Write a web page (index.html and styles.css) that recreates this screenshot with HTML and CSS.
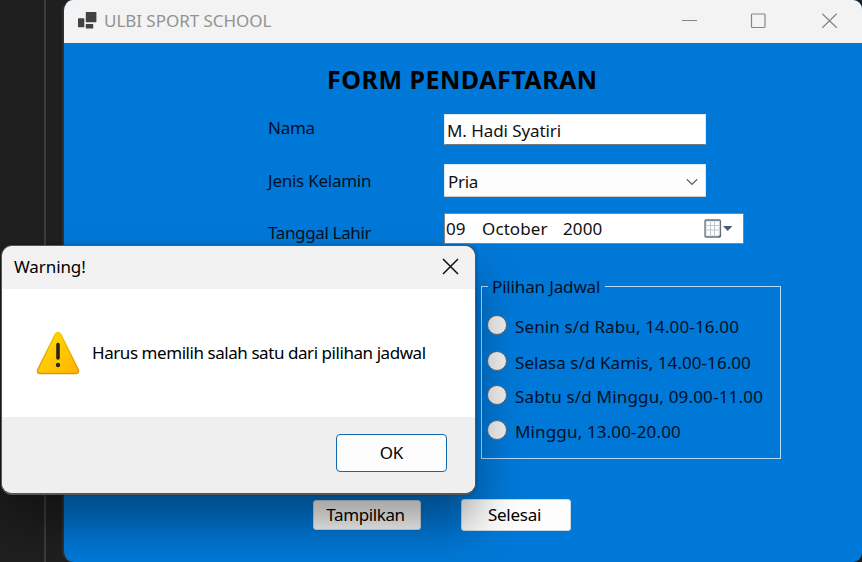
FILE: index.html
```html
<!DOCTYPE html>
<html lang="id">
<head>
<meta charset="utf-8">
<title>ULBI SPORT SCHOOL</title>
<link rel="stylesheet" href="styles.css">
</head>
<body>
<div class="desktop">
  <div class="edge"></div>
  <main class="window">
    <header class="titlebar">
      <svg class="app-icon" width="20" height="18" viewBox="0 0 20 18"><rect x="0" y="6.2" width="6.3" height="9" rx=".6"/><rect x="7.8" y="0" width="10.6" height="10.2" rx=".6"/><rect x="7.8" y="12" width="7.4" height="4.6" rx=".6"/></svg>
      <span class="app-name">ULBI SPORT SCHOOL</span>
      <svg class="controls" width="156" height="16" viewBox="0 0 156 16"><path d="M0 7.5H15M69.5 1.8Q69.5 1 70.3 1H82.2Q83 1 83 1.8V13.7Q83 14.5 82.2 14.5H70.3Q69.5 14.5 69.5 13.7ZM140.3 .8L154.7 14.7M154.7 .8L140.3 14.7"/></svg>
    </header>
    <form class="form">
      <h1>FORM PENDAFTARAN</h1>
      <div class="row row-name"><label>Nama</label><div class="field name">M. Hadi Syatiri</div></div>
      <div class="row row-sex"><label>Jenis Kelamin</label><div class="field select"><span>Pria</span><svg width="12" height="8" viewBox="0 0 12 8"><path d="M.8 1.2L6 6.3L11.2 1.2"/></svg></div></div>
      <div class="row row-date"><label>Tanggal Lahir</label><div class="field date"><span class="day">09</span><span class="month">October</span><span class="year">2000</span>
        <svg width="30" height="20" viewBox="0 0 30 20"><rect class="cal" x="1" y="1" width="15.5" height="17" rx="1"/><rect class="sheet" x="3" y="3" width="11.5" height="13"/><path class="grid" d="M6.5 3V16M10.5 3V16M3 6.5H14.5M3 11H14.5"/><path class="fold" d="M14 18L17 15V18Z"/><path class="arrow" d="M19 7H28.4L23.7 12Z"/></svg></div></div>
      <section class="group">
        <div class="legend"><i></i><span>Pilihan Jadwal</span><i></i></div>
        <div class="options">
          <label class="option tall"><i></i><span class="o1">Senin s/d Rabu, 14.00-16.00</span></label>
          <label class="option"><i></i><span class="o2">Selasa s/d Kamis, 14.00-16.00</span></label>
          <label class="option"><i></i><span class="o3">Sabtu s/d Minggu, 09.00-11.00</span></label>
          <label class="option"><i></i><span class="o4">Minggu, 13.00-20.00</span></label>
        </div>
      </section>
      <div class="actions"><button type="button" class="show">Tampilkan</button><button type="button" class="done">Selesai</button></div>
    </form>
  </main>
  <div class="dialog" role="alertdialog">
    <header class="dialog-head"><span>Warning!</span><svg width="17" height="17" viewBox="0 0 17 17"><path d="M1 1L16 16M16 1L1 16"/></svg></header>
    <div class="dialog-body">
      <svg width="44" height="44" viewBox="0 0 44 44"><defs><linearGradient id="y" x1="0" y1="0" x2="1" y2="1"><stop offset="0" stop-color="#ffe000"/><stop offset="1" stop-color="#ffb300"/></linearGradient><linearGradient id="e" x1="0" y1="0" x2="0" y2="1"><stop offset="0" stop-color="#f3c800"/><stop offset="1" stop-color="#df9110"/></linearGradient></defs><path d="M19.3 3.2Q22 -.2 24.7 3.2L42.2 38.5Q43.6 42.2 40 42.5H4Q.4 42.2 1.8 38.5Z" fill="url(#y)" stroke="url(#e)" stroke-width="1.4"/><path d="M22 13.5V27" stroke="#2b2416" stroke-width="3.6" stroke-linecap="round"/><circle cx="22" cy="34" r="2.2" fill="#2b2416"/></svg>
      <p>Harus memilih salah satu dari pilihan jadwal</p>
    </div>
    <footer class="dialog-foot"><button type="button">OK</button></footer>
  </div>
</div>
</body>
</html>
```
FILE: styles.css
```css
* { box-sizing: border-box; }
body { margin: 0; overflow: hidden; font: 400 17px/24px "Noto Sans", "Open Sans", sans-serif; letter-spacing: -.25px; }
button { font: inherit; letter-spacing: inherit; padding: 0; }
svg { display: block; flex: none; }
.desktop { position: relative; display: flex; width: 862px; height: 562px; background: #1f1f1f; overflow: hidden; }
.edge { width: 46px; border-right: 2px solid #3d3d3d; margin-right: 16px; flex: none; }
.window { width: 800px; flex: none; border-left: 2px solid #303030; background: #0078d7; border-radius: 11px 9px 9px 11px; overflow: hidden; }
.titlebar { height: 43px; display: flex; align-items: center; padding: 0 24px 2px 14px; background: #f3f3f3; color: #929292; }
.app-icon { fill: #424242; margin-right: 6px; }
.app-name { font-size: 17px; letter-spacing: -.04px; flex: 1; white-space: nowrap; }
.controls { fill: none; stroke: #858585; stroke-width: 1.2; }
.form { height: 519px; color: #001028; }
h1 { margin: 0; padding: 18px 0 0 263px; font-size: 25px; line-height: 36px; height: 71px; color: #000; font-weight: 700; white-space: nowrap; letter-spacing: .5px; }
.row { display: flex; margin-left: 204px; }
.row > label { width: 176px; white-space: nowrap; }
.row-name { height: 50px; }
.row-name > label { padding-top: 2px; }
.row-sex { height: 49px; }
.row-sex > label { padding-top: 5px; }
.row-date { height: 73px; }
.row-date > label { padding-top: 8px; letter-spacing: -.35px; }
.field { width: 262px; height: 31px; display: flex; align-items: center; background: #fff; color: #111; border: 1px solid #dbe9f5; border-bottom-color: #777; border-radius: 1px; padding-left: 2px; padding-top: 2px; white-space: nowrap; letter-spacing: -.08px; }
.select { height: 33px; justify-content: space-between; padding: 2px 7px 0 3px; background: #fdfdfd; border-bottom-color: #ccc; letter-spacing: -.3px; }
.select svg { fill: none; stroke: #666; stroke-width: 1.2; }
.date { width: 300px; border-color: #858585; padding: 1px 9px 0 1px; letter-spacing: .1px; }
.day { width: 36px; }
.month { width: 81px; }
.date svg { margin-left: auto; margin-top: -1px; }
.cal { fill: #e1e5ea; stroke: #68707a; stroke-width: 1.3; }
.sheet { fill: #fff; }
.grid { fill: none; stroke: #b9c6d6; }
.fold { fill: #58616c; }
.arrow { fill: #465a7d; }
.group { width: 300px; margin-left: 417px; height: 185px; }
.legend { display: flex; height: 11px; white-space: nowrap; }
.legend i { border-top: 1px solid #b5dcf8; }
.legend span { line-height: 24px; margin: -11px 0 0; padding: 0 5px 0 4px; width: 117px; letter-spacing: -.15px; }
.legend i:first-child { width: 7px; border-left: 1px solid #b5dcf8; }
.legend i:last-child { flex: 1; border-right: 1px solid #b5dcf8; }
.options { border: 1px solid #b5dcf8; border-top: 0; height: 162px; padding: 18px 0 0 5px; }
.option { display: flex; height: 34.6px; white-space: nowrap; }
.option.tall { height: 35.6px; }
.option i { width: 20px; height: 20px; margin-right: 8px; border: 1px solid #5d6974; border-radius: 50%; background: #ededed; flex: none; }
.o1 { letter-spacing: .13px; }
.o2 { letter-spacing: .06px; }
.o3 { letter-spacing: .18px; }
.o4 { letter-spacing: .15px; }
.actions { display: flex; margin-left: 249px; gap: 40px; padding-top: 28px; align-items: center; }
.actions button { border: 1px solid #ccd9e3; border-radius: 3px; background: #fdfdfd; color: #000; padding-right: 3px; }
.actions .show { width: 108px; height: 30px; letter-spacing: -.4px; }
.actions .done { width: 110px; height: 32px; }
.dialog { position: absolute; left: 1px; top: 245px; width: 475px; height: 250px; border: 1px solid #55585b; border-bottom-width: 2px; border-radius: 11px; background: #fff; background-clip: padding-box; box-shadow: 0 30px 46px rgba(0,0,0,.38), 0 0 3px rgba(0,0,0,.3); color: #000; overflow: hidden; }
.dialog-head { height: 43px; background: #f3f2f3; display: flex; align-items: center; justify-content: space-between; padding: 0 16px 2px 12px; }
.dialog-head span { letter-spacing: -.1px; }
.dialog-head svg { stroke: #111; stroke-width: 1.5; }
.dialog-body { height: 128px; display: flex; align-items: center; padding-left: 34px; }
.dialog-body p { margin: 0 0 0 12px; white-space: nowrap; letter-spacing: -.44px; }
.dialog-foot { height: 76px; background: #efefef; padding: 17px 28px; display: flex; justify-content: flex-end; }
.dialog-foot button { width: 111px; height: 38px; background: #fdfdfd; border: 1px solid #1668ad; border-radius: 4px; color: #000; }
```
